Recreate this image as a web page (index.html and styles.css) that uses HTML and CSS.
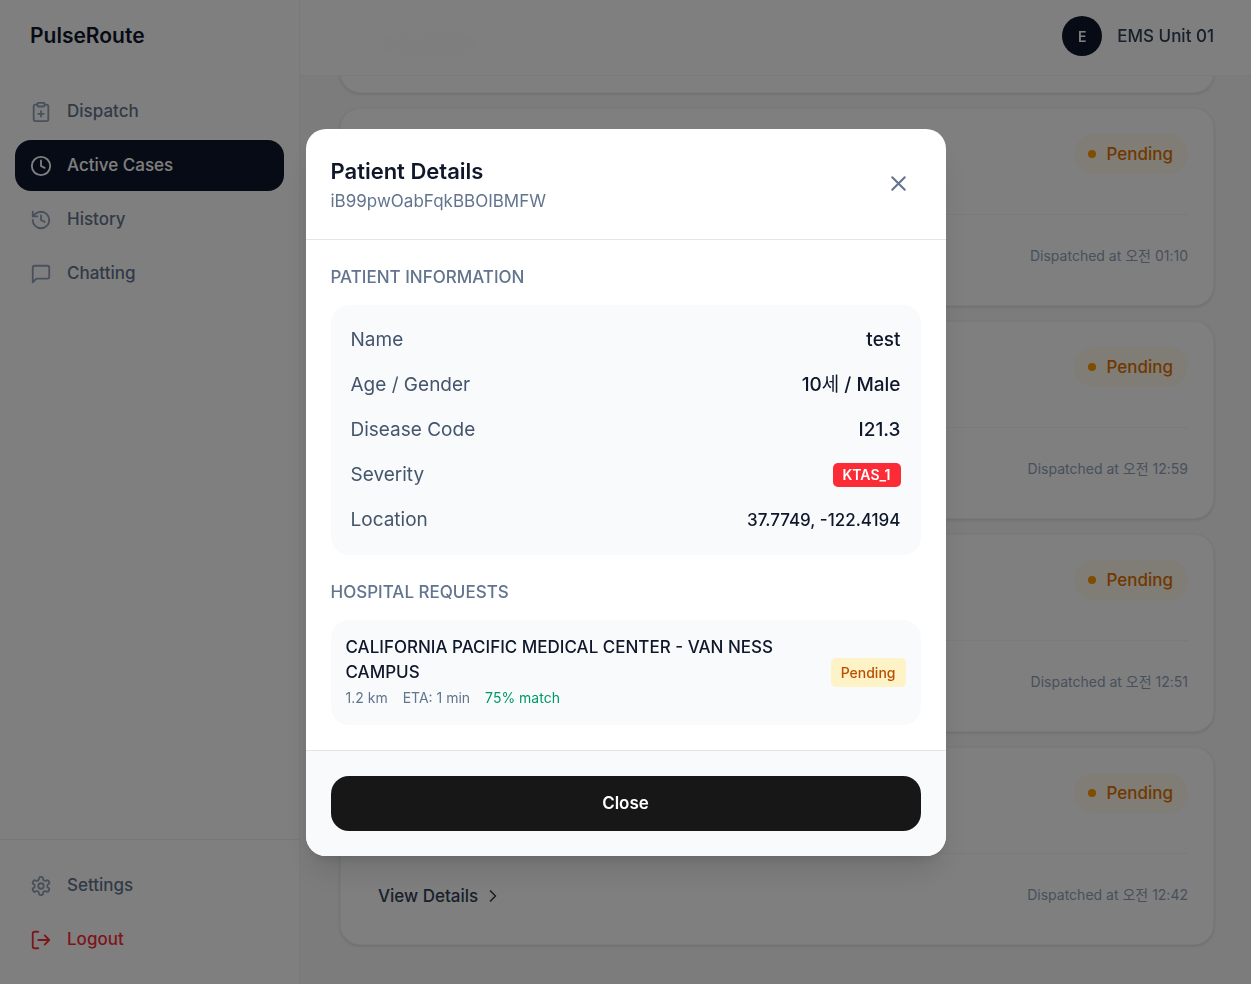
FILE: index.html
```html
<!DOCTYPE html>
<html lang="en">
<head>
<meta charset="utf-8">
<meta name="viewport" content="width=device-width, initial-scale=1">
<title>PulseRoute</title>
<link rel="stylesheet" href="styles.css">
</head>
<body>
<div class="app">
  <aside class="sidebar">
    <div class="brand">PulseRoute</div>
    <nav class="nav">
      <a class="nav-item" href="#dispatch">
        <svg class="icon" viewBox="0 0 24 24"><rect x="8" y="2" width="8" height="4" rx="1"/><path d="M16 4h2a2 2 0 0 1 2 2v14a2 2 0 0 1-2 2H6a2 2 0 0 1-2-2V6a2 2 0 0 1 2-2h2"/><path d="M9 14h6M12 11v6"/></svg>
        Dispatch</a>
      <a class="nav-item is-active" href="#cases" aria-current="page">
        <svg class="icon" viewBox="0 0 24 24"><circle cx="12" cy="12" r="10"/><path d="M12 6v6l4 2"/></svg>
        Active Cases</a>
      <a class="nav-item" href="#history">
        <svg class="icon" viewBox="0 0 24 24"><path d="M3 12a9 9 0 1 0 9-9 9.75 9.75 0 0 0-6.74 2.74L3 8"/><path d="M3 3v5h5"/><path d="M12 7v5l4 2"/></svg>
        History</a>
      <a class="nav-item" href="#chat">
        <svg class="icon" viewBox="0 0 24 24"><path d="M21 15a2 2 0 0 1-2 2H7l-4 4V5a2 2 0 0 1 2-2h14a2 2 0 0 1 2 2z"/></svg>
        Chatting</a>
    </nav>
    <div class="sidebar-foot">
      <a class="nav-item" href="#settings">
        <svg class="icon" viewBox="0 0 24 24"><path d="M12.22 2h-.44a2 2 0 0 0-2 2v.18a2 2 0 0 1-1 1.73l-.43.25a2 2 0 0 1-2 0l-.15-.08a2 2 0 0 0-2.73.73l-.22.38a2 2 0 0 0 .73 2.73l.15.1a2 2 0 0 1 1 1.72v.51a2 2 0 0 1-1 1.74l-.15.09a2 2 0 0 0-.73 2.73l.22.38a2 2 0 0 0 2.73.73l.15-.08a2 2 0 0 1 2 0l.43.25a2 2 0 0 1 1 1.73V20a2 2 0 0 0 2 2h.44a2 2 0 0 0 2-2v-.18a2 2 0 0 1 1-1.73l.43-.25a2 2 0 0 1 2 0l.15.08a2 2 0 0 0 2.73-.73l.22-.39a2 2 0 0 0-.73-2.73l-.15-.08a2 2 0 0 1-1-1.74v-.5a2 2 0 0 1 1-1.74l.15-.09a2 2 0 0 0 .73-2.73l-.22-.38a2 2 0 0 0-2.73-.73l-.15.08a2 2 0 0 1-2 0l-.43-.25a2 2 0 0 1-1-1.73V4a2 2 0 0 0-2-2z"/><circle cx="12" cy="12" r="3"/></svg>
        Settings</a>
      <button class="nav-item is-danger" type="button">
        <svg class="icon" viewBox="0 0 24 24"><path d="M9 21H5a2 2 0 0 1-2-2V5a2 2 0 0 1 2-2h4"/><path d="m16 17 5-5-5-5M21 12H9"/></svg>
        Logout</button>
    </div>
  </aside>

  <main class="main">
    <header class="topbar">
      <span class="avatar">E</span>
      <span class="unit">EMS Unit 01</span>
    </header>
    <div class="cases">
      <article class="case">
        <div class="case-foot">
          <button class="details" type="button">View Details <svg class="chevron" viewBox="0 0 24 24"><path d="m9 18 6-6-6-6"/></svg></button>
        </div>
      </article>
      <article class="case">
        <div class="case-top"><span class="status">Pending</span></div>
        <div class="case-foot">
          <button class="details" type="button">View Details <svg class="chevron" viewBox="0 0 24 24"><path d="m9 18 6-6-6-6"/></svg></button>
          <span class="time">Dispatched at 오전 01:10</span>
        </div>
      </article>
      <article class="case">
        <div class="case-top"><span class="status">Pending</span></div>
        <div class="case-foot">
          <button class="details" type="button">View Details <svg class="chevron" viewBox="0 0 24 24"><path d="m9 18 6-6-6-6"/></svg></button>
          <span class="time">Dispatched at 오전 12:59</span>
        </div>
      </article>
      <article class="case">
        <div class="case-top"><span class="status">Pending</span></div>
        <div class="case-foot">
          <button class="details" type="button">View Details <svg class="chevron" viewBox="0 0 24 24"><path d="m9 18 6-6-6-6"/></svg></button>
          <span class="time">Dispatched at 오전 12:51</span>
        </div>
      </article>
      <article class="case">
        <div class="case-top"><span class="status">Pending</span></div>
        <div class="case-foot">
          <button class="details" type="button">View Details <svg class="chevron" viewBox="0 0 24 24"><path d="m9 18 6-6-6-6"/></svg></button>
          <span class="time">Dispatched at 오전 12:42</span>
        </div>
      </article>
    </div>
  </main>
</div>

<div class="overlay">
  <section class="modal" role="dialog" aria-modal="true" aria-labelledby="modal-title">
    <header class="modal-head">
      <div>
        <h2 class="modal-title" id="modal-title">Patient Details</h2>
        <p class="modal-id">iB99pwOabFqkBBOIBMFW</p>
      </div>
      <button class="modal-x" type="button" aria-label="Dismiss">
        <svg class="x-icon" viewBox="0 0 24 24"><path d="M18 6 6 18M6 6l12 12"/></svg>
      </button>
    </header>
    <div class="modal-body">
      <section class="group">
        <h3 class="group-title">PATIENT INFORMATION</h3>
        <dl class="info">
          <div class="row"><dt>Name</dt><dd>test</dd></div>
          <div class="row"><dt>Age / Gender</dt><dd>10<span class="ko" lang="ko">세</span> / Male</dd></div>
          <div class="row"><dt>Disease Code</dt><dd>I21.3</dd></div>
          <div class="row"><dt>Severity</dt><dd class="severity">KTAS_1</dd></div>
          <div class="row"><dt>Location</dt><dd class="coords">37.7749, -122.4194</dd></div>
        </dl>
      </section>
      <section class="group">
        <h3 class="group-title">HOSPITAL REQUESTS</h3>
        <div class="request">
          <div class="request-text">
            <p class="hospital">CALIFORNIA PACIFIC MEDICAL CENTER - VAN NESS CAMPUS</p>
            <div class="meta"><span>1.2 km</span><span>ETA: 1 min</span><span class="match">75% match</span></div>
          </div>
          <span class="tag">Pending</span>
        </div>
      </section>
    </div>
    <footer class="modal-foot"><button class="close" type="button">Close</button></footer>
  </section>
</div>
</body>
</html>
```

FILE: styles.css
```css
* { box-sizing: border-box; }
body, h2, h3, p, dl, dd { margin: 0; }
body {
  font-family: Inter, "Noto Sans CJK KR", sans-serif;
  font-size: 17px;
  line-height: 25px;
  color: #0f172b;
  background: #f8f8f8;
}
button { font: inherit; border: 0; background: none; cursor: pointer; }
svg { fill: none; stroke: currentColor; stroke-linecap: round; stroke-linejoin: round; flex: none; }

.app { display: flex; height: 100vh; overflow: hidden; }

.sidebar {
  display: flex;
  flex-direction: column;
  width: 300px;
  flex: none;
  background: #fff;
  border-right: 1px solid #f5f5f5;
}
.brand { padding: 20px 30px 16px; font-size: 21px; line-height: 32px; font-weight: 600; }
.nav, .sidebar-foot { display: flex; flex-direction: column; gap: 3px; padding: 18px 15px; }
.sidebar-foot { margin-top: auto; padding: 20px 15px 19px; border-top: 1px solid #f0f0f0; }
.nav-item {
  display: flex;
  align-items: center;
  gap: 15px;
  padding: 13px 15px;
  border-radius: 16px;
  color: #62748e;
  font-weight: 500;
  text-align: left;
  text-decoration: none;
}
.icon { width: 22px; height: 22px; stroke-width: 2; color: #90a1b9; }
.is-active { background: #0f172b; color: #fff; }
.is-danger { color: #fb2c36; }
.is-active .icon, .is-danger .icon { color: inherit; }

.main { position: relative; flex: 1; min-width: 0; }
.topbar {
  position: absolute;
  inset: 0 0 auto;
  z-index: 1;
  display: flex;
  align-items: center;
  justify-content: flex-end;
  gap: 15px;
  padding: 16px 37px 19px;
  background: rgba(255, 255, 255, 0.9);
  backdrop-filter: blur(12px);
  border-bottom: 1px solid #f5f5f5;
}
.avatar {
  display: grid;
  place-items: center;
  width: 40px;
  height: 40px;
  border-radius: 50%;
  background: #0f172b;
  color: #fff;
  font-size: 14px;
  font-weight: 600;
}
.unit { color: #314158; font-weight: 500; }

.cases {
  display: flex;
  flex-direction: column;
  justify-content: flex-end;
  gap: 15px;
  height: 100%;
  padding: 0 37px 39px 40px;
  overflow: hidden;
}
.case {
  flex: none;
  padding: 25px;
  background: #fff;
  border: 1px solid #f1f5f9;
  border-radius: 20px;
  box-shadow: 0 1px 3px rgba(15, 23, 43, 0.14);
}
.case-top { display: flex; justify-content: flex-end; padding-bottom: 40px; border-bottom: 1px solid #f1f5f9; }
.status {
  display: flex;
  align-items: center;
  gap: 10px;
  height: 40px;
  padding: 0 15px 0 14px;
  border-radius: 20px;
  background: #fffbeb;
  color: #e17100;
  font-weight: 500;
}
.status::before { content: ""; width: 8px; height: 8px; border-radius: 50%; background: #fe9a00; }
.case-foot { display: flex; align-items: center; justify-content: space-between; padding-top: 15px; }
.details { display: flex; align-items: center; gap: 5px; height: 50px; padding: 4px 12px 0; color: #314158; font-weight: 500; }
.chevron { width: 20px; height: 20px; stroke-width: 2; }
.time { color: #90a1b9; font-size: 14px; }

.overlay {
  position: fixed;
  inset: 0;
  z-index: 2;
  display: grid;
  place-items: center;
  padding: 16px;
  background: rgba(0, 0, 0, 0.5);
}
.modal {
  width: 100%;
  max-width: 640px;
  overflow: hidden;
  background: #fff;
  border-radius: 20px;
  box-shadow: 0 20px 32px -6px rgba(0, 0, 0, 0.12), 0 8px 12px -6px rgba(0, 0, 0, 0.12);
}
.modal-head { display: flex; align-items: center; justify-content: space-between; padding: 25px; border-bottom: 1px solid #e5e5e5; }
.modal-title { font-size: 22px; line-height: 35px; font-weight: 600; }
.modal-id { color: #62748e; }
.modal-x { display: grid; padding: 10px; color: #62748e; }
.x-icon { width: 25px; height: 25px; stroke-width: 2; }
.modal-body { display: grid; gap: 25px; padding: 25px; }
.group { display: grid; gap: 15px; }
.group-title { font-size: 17px; font-weight: 500; color: #62748e; }
.info { display: grid; gap: 15px; padding: 20px; border-radius: 18px; background: #f8fafc; }
.row { display: flex; align-items: center; justify-content: space-between; font-size: 19px; line-height: 30px; }
.row dt { color: #45556c; }
.row dd { font-weight: 500; }
.ko { font-weight: 400; }
.row .severity { padding: 0 10px; border-radius: 5px; background: #fb2c36; color: #fff; font-size: 14px; line-height: 24px; font-weight: 600; }
.row .coords { font-size: 17px; }
.request { display: flex; align-items: center; justify-content: space-between; gap: 15px; padding: 15px; border-radius: 18px; background: #f8fafc; }
.request-text { flex: 1; max-width: 450px; }
.hospital { font-weight: 500; }
.meta { display: flex; gap: 15px; color: #62748e; font-size: 14px; }
.match { color: #009966; }
.tag { padding: 2px 10px; border-radius: 5px; background: #fef3c6; color: #bb4d00; font-size: 14px; font-weight: 500; }
.modal-foot { padding: 25px; border-top: 1px solid #e5e5e5; background: #f8fafc; }
.close { width: 100%; height: 55px; border-radius: 18px; background: #171717; color: #fff; font-weight: 600; }
```
